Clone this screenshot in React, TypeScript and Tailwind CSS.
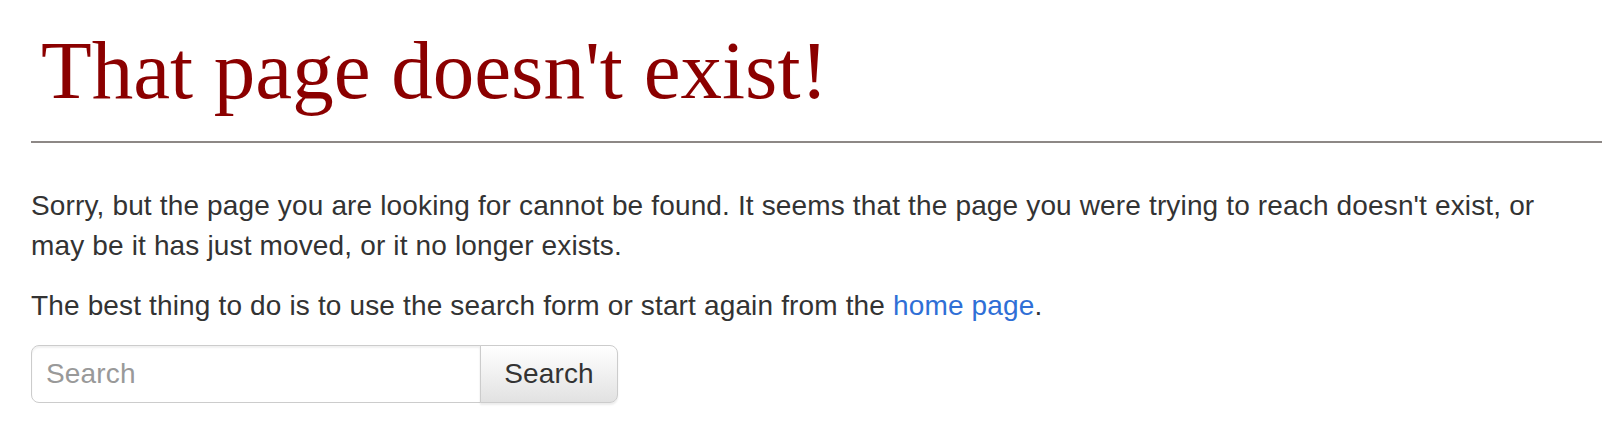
export default function App() {
  return (
    <div className="min-h-[444px] bg-white pl-[31px] font-['Liberation_Sans',Arial,sans-serif] text-[28px] leading-[40px] tracking-[0.15px] text-[#333333]">
      <div className="border-b-2 border-[#8d8886] pt-[25px] pb-[25px] pl-[10px]">
        <h1 className="font-['Liberation_Serif','Times_New_Roman',serif] text-[83px] font-normal leading-[91px] tracking-normal text-[#8b0000]">
          That page doesn't exist!
        </h1>
      </div>

      <div className="max-w-[1530px] pt-[43px]">
        <p className="mb-[20px]">
          Sorry, but the page you are looking for cannot be found. It seems that the page you were
          trying to reach doesn't exist, or may be it has just moved, or it no longer exists.
        </p>
        <p>
          The best thing to do is to use the search form or start again from the{" "}
          <a href="#" className="text-[#2f6fd6]">
            home page
          </a>
          .
        </p>

        <form className="mt-[19px] flex h-[58px] w-[587px]" onSubmit={(e) => e.preventDefault()}>
          <input
            type="text"
            placeholder="Search"
            className="h-full w-[450px] rounded-l-[8px] border border-[#cccccc] bg-white pl-[14px] text-[28px] text-[#333333] shadow-[inset_0_2px_2px_rgba(0,0,0,0.06)] outline-none placeholder:text-[#999999]"
          />
          <button
            type="submit"
            className="-ml-px h-full w-[138px] rounded-r-[8px] border border-[#cccccc] bg-gradient-to-b from-white to-[#e2e2e2] text-[28px] text-[#333333] shadow-[0_2px_2px_rgba(0,0,0,0.08)]"
          >
            Search
          </button>
        </form>
      </div>
    </div>
  );
}
